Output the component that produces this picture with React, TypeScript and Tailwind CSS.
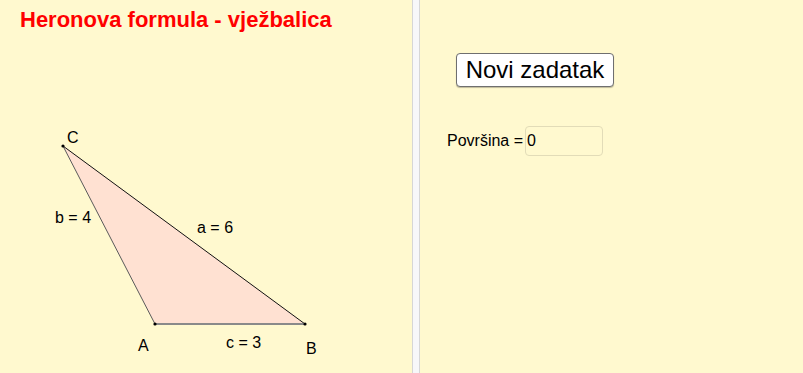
import React from "react";

// Left graphics view: triangle with labelled sides and vertices
function TriangleView() {
    const C = { x: 63, y: 146 };
    const A = { x: 155, y: 324 };
    const B = { x: 305, y: 324 };

    const labels = [
        { text: "C", x: 67, y: 143 },
        { text: "b = 4", x: 55, y: 223 },
        { text: "a = 6", x: 197, y: 233 },
        { text: "A", x: 138, y: 351 },
        { text: "c = 3", x: 226, y: 348 },
        { text: "B", x: 306, y: 354 },
    ];

    return (
        <svg className="absolute inset-0" width="412" height="373" viewBox="0 0 412 373">
            <polygon points={`${A.x},${A.y} ${B.x},${B.y} ${C.x},${C.y}`} fill="#ffe1d2" stroke="none" />
            <line x1={C.x} y1={C.y} x2={A.x} y2={A.y} stroke="#5a5a5a" strokeWidth="1" />
            <line x1={C.x} y1={C.y} x2={B.x} y2={B.y} stroke="#111" strokeWidth="1" />
            <line x1={A.x} y1={A.y} x2={B.x} y2={B.y} stroke="#8a8a8a" strokeWidth="2" />
            {[A, B, C].map((p, i) => (
                <circle key={i} cx={p.x} cy={p.y} r="1.6" fill="#000" />
            ))}
            {labels.map((l) => (
                <text
                    key={l.text}
                    x={l.x}
                    y={l.y}
                    fontSize="16"
                    fill="#000"
                    style={{ fontFamily: '"Liberation Sans", Arial, sans-serif' }}
                >
                    {l.text}
                </text>
            ))}
        </svg>
    );
}

export default function App() {
    return (
        <div className="flex h-[373px] w-[803px] overflow-hidden bg-[#fff9cf] font-['Liberation_Sans',Arial,sans-serif]">
            {/* graphics panel */}
            <div className="relative w-[412px] shrink-0">
                <TriangleView />
                <h1 className="relative pl-5 pt-[6px] text-[22px] font-bold leading-[28px] text-[#ff0000]">
                    Heronova formula - vježbalica
                </h1>
            </div>

            {/* splitter */}
            <div className="w-2 shrink-0 border-x border-[#d6d6d6] bg-[#f7f7f9]"></div>

            {/* right panel */}
            <div className="flex flex-1 flex-col items-start pl-[27px]">
                <button className="ml-[9px] mt-[53px] h-[34px] w-[158px] rounded-[4px] border border-[#6f6f6f] bg-white text-[24px] leading-none text-black shadow-[0_1px_1px_rgba(0,0,0,0.25)]">
                    Novi zadatak
                </button>
                <div className="mt-[39px] flex items-center">
                    <span className="text-[16px] leading-none text-black">Površina =</span>
                    <div className="ml-[2px] flex h-[30px] w-[78px] items-center rounded-[4px] border border-[#e2dcb8] pl-[1px] text-[16px] text-black">
                        0
                    </div>
                </div>
            </div>
        </div>
    );
}
